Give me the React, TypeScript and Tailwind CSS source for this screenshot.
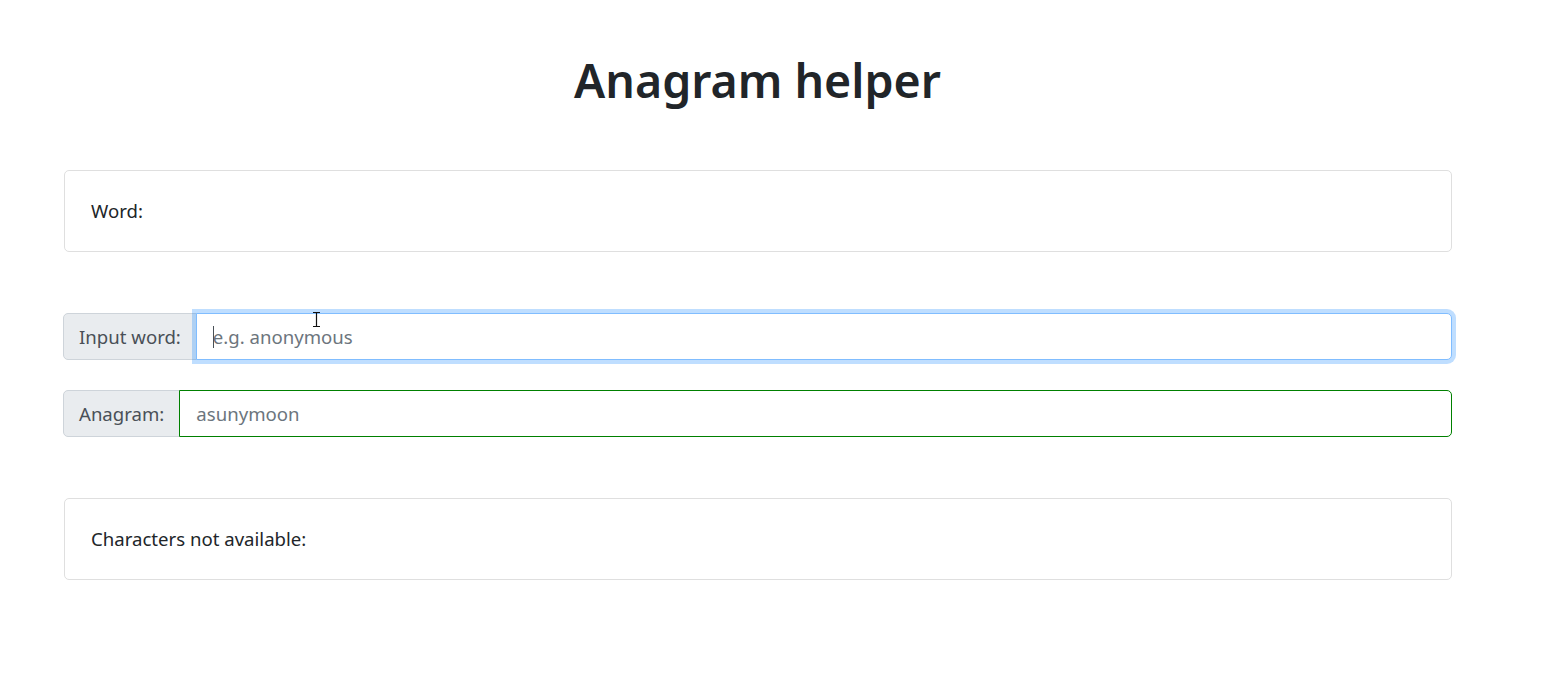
import React from "react";

function Card({ label }: { label: string }) {
  return (
    <div className="rounded-[5px] border border-[#dfdfdf] px-[26px] py-[25px] text-[18.6px] leading-[30px] text-[#212529]">
      {label}
    </div>
  );
}

export default function App() {
  return (
    <div
      className="relative min-h-screen bg-white"
      style={{ fontFamily: '"Noto Sans", "Open Sans", sans-serif' }}
    >
      <div className="ml-[63px] w-[1389px] pt-[50px]">
        <h1 className="text-center text-[46.5px] font-semibold leading-[60px] text-[#212529]">
          Anagram helper
        </h1>

        <div className="mt-[60px] pl-px">
          <Card label="Word:" />
        </div>

        {/* Input word */}
        <div className="mt-[61px] flex h-[47px] text-[18.6px]">
          <span className="flex items-center rounded-l-[5px] border border-[#ced4da] bg-[#e9ecef] px-[15px] text-[#495057]">
            Input word:
          </span>
          <div className="relative -ml-px flex-1">
            <input
              readOnly
              placeholder="e.g. anonymous"
              className="h-full w-full rounded-r-[5px] border border-[#80bdff] bg-white px-[16px] text-[#495057] shadow-[0_0_0_4px_rgba(0,123,255,0.25)] outline-none placeholder:text-[#6c757d]"
            />
            <span className="absolute left-[17px] top-[13px] h-[22px] w-px bg-[#495057]" />
          </div>
        </div>

        {/* Anagram */}
        <div className="mt-[30px] flex h-[47px] text-[18.6px]">
          <span className="flex items-center rounded-l-[5px] border border-[#ced4da] bg-[#e9ecef] px-[15px] text-[#495057]">
            Anagram:
          </span>
          <input
            readOnly
            placeholder="asunymoon"
            className="-ml-px h-full flex-1 rounded-r-[5px] border border-[#008000] bg-white px-[16px] text-[#495057] outline-none placeholder:text-[#6c757d]"
          />
        </div>

        <div className="mt-[61px] pl-px">
          <Card label="Characters not available:" />
        </div>
      </div>

      {/* mouse I-beam cursor */}
      <svg
        className="absolute left-[312px] top-[311px]"
        width="9"
        height="17"
        viewBox="0 0 9 17"
      >
        <path d="M1 1.5h7M1 15.5h7M4.5 1.5v14" stroke="#111" strokeWidth="1.2" fill="none" />
      </svg>
    </div>
  );
}
